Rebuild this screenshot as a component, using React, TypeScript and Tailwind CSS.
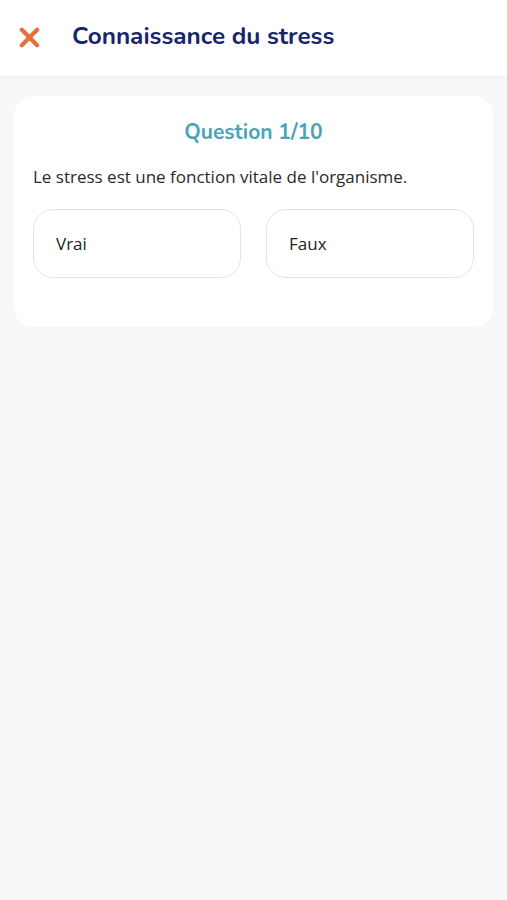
import React from "react";

const font = { fontFamily: '"Nunito", "Lato", "Noto Sans", sans-serif' };

export default function App() {
  const answers = ["Vrai", "Faux"];
  return (
    <div className="min-h-screen bg-[#f7f8fa]" style={font}>
      <header className="h-[76px] bg-white flex items-center shadow-[0_1px_3px_rgba(0,0,0,0.05)]">
        <div className="w-[72px] flex justify-center pr-[14px] pb-[2px]">
          <svg width="23" height="23" viewBox="0 0 24 24" fill="none">
            <path d="M4 4L20 20M20 4L4 20" stroke="#e5703b" strokeWidth="4.5" strokeLinecap="round" />
          </svg>
        </div>
        <h1 className="text-[24.3px] font-bold text-[#17266b] leading-none pb-[3px]">Connaissance du stress</h1>
      </header>

      <main className="px-[14px] pt-[20px]">
        <section className="bg-white rounded-[20px] pt-[21px] pb-[49px] px-[19px]">
          <h2 className="text-center text-[21px] font-bold text-[#4aa4b6] leading-[30px]">Question 1/10</h2>
          <p className="mt-[18px] text-[17px] text-[#2a2a2a] leading-[24px]" style={{ fontFamily: '"Open Sans", sans-serif' }}>
            Le stress est une fonction vitale de l'organisme.
          </p>
          <div className="mt-[20px] grid grid-cols-2 gap-[25px]">
            {answers.map((a) => (
              <button
                key={a}
                className="h-[69px] rounded-[20px] border border-[#e3e3e3] bg-white text-left px-[22px] text-[17px] text-[#222]"
                style={{ fontFamily: '"Open Sans", sans-serif' }}
              >
                {a}
              </button>
            ))}
          </div>
        </section>
      </main>
    </div>
  );
}
